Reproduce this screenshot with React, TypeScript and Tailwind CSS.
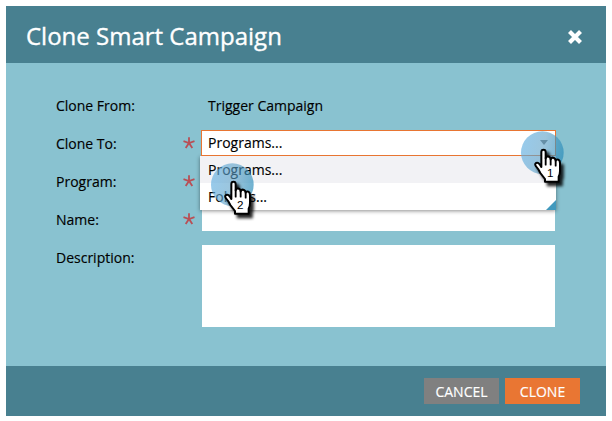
import React from "react";

function Pointer({ label, className }: { label: string; className: string }) {
  const gradient = `halo-${label}`;
  const shadow = `shade-${label}`;
  return (
    <svg
      className={`pointer-events-none absolute z-20 h-[74px] w-[64px] overflow-visible ${className}`}
      viewBox="0 0 192 222"
    >
      <defs>
        <linearGradient id={gradient} x1="0" x2="1" y1="0.4" y2="0.6">
          <stop offset="0" stopColor="#62b0e2" stopOpacity="0.66" />
          <stop offset="0.5" stopColor="#5a9fc6" stopOpacity="0.6" />
          <stop offset="1" stopColor="#2389b8" stopOpacity="0.66" />
        </linearGradient>
        <filter id={shadow} x="-40%" y="-30%" width="200%" height="180%">
          <feGaussianBlur stdDeviation="5.5" />
        </filter>
      </defs>
      <circle cx="64" cy="65" r="64" fill={`url(#${gradient})`} />
      <g transform="translate(36 47)">
        <path
          d="M25 60V16Q25 9 31.5 9T38 16V34L80 46V76Q81 84 77 92V105H36V97L22 79Q16 66 9 59Q4 52 9 49Q15 46 25 58Z"
          transform="translate(9 10)"
          fill="#000"
          stroke="#000"
          strokeWidth="7"
          opacity="0.85"
          filter={`url(#${shadow})`}
        />
        <path
          d="M25 61V16Q25 9 31.5 9T38 16V35Q39 29 45 29.5Q52 30 53 38Q55 32 61 33Q67 34 68 42Q70 37 76 39Q81 41 81 50V73Q81 82 77 90V105H36V97L22 79Q16 66 9 59Q4 52 9 49Q15 46 20 53Z"
          fill="#fff"
          stroke="#000"
          strokeWidth="6"
          strokeLinejoin="round"
        />
        <path d="M38 34V54M53 38V54M68 42V57" fill="none" stroke="#000" strokeWidth="5.5" strokeLinecap="round" />
        <text
          x="52"
          y="91"
          textAnchor="middle"
          fontSize="35"
          fontFamily="Liberation Sans, sans-serif"
          fill="#000"
        >
          {label}
        </text>
      </g>
    </svg>
  );
}

function Label({ children, required }: { children: string; required?: boolean }) {
  return (
    <div className="flex w-[145px] shrink-0 items-center justify-between pr-[6px]">
      <span>{children}</span>
      {required && (
        <svg className="h-3 w-3" viewBox="0 0 12 12" fill="none" stroke="#b94f55" strokeWidth="1.8">
          <path d="M6 .3V6M.5 4.2 6 6l5.5-1.8M2.7 11 6 6l3.3 5" />
        </svg>
      )}
    </div>
  );
}

export default function App() {
  return (
    <div className="h-[421px] w-[612px] overflow-hidden bg-white p-[6px] font-['Open_Sans',sans-serif] text-[14px] leading-[19px] text-black [-webkit-text-stroke:0.15px]">
      <div className="flex h-[410px] w-[600px] flex-col bg-[#89c2d0]">
        <header className="flex h-[57px] shrink-0 items-center justify-between bg-[#488090] pr-6 pl-5">
          <h1 className="relative top-px text-[24px] leading-8 text-white [-webkit-text-stroke:0.35px]">
            Clone Smart Campaign
          </h1>
          <svg className="relative top-[2px] h-[14px] w-[14px]" viewBox="0 0 14 14" stroke="#fff" strokeWidth="4.2">
            <path d="m1.5 1.5 11 11m0-11-11 11" />
          </svg>
        </header>

        <main className="flex flex-1 flex-col gap-3 pt-[29px] pl-[50px]">
          <div className="flex h-[26px] items-center">
            <Label>Clone From:</Label>
            <span className="pl-[7px]">Trigger Campaign</span>
          </div>
          <div className="flex h-[26px] items-center">
            <Label required>Clone To:</Label>
            <div className="relative h-[26px] w-[355px]">
              <div className="relative z-10 flex h-full items-center justify-between border border-[#e87532] bg-white pr-[7px] pb-[2px] pl-[6px]">
                <span>Programs...</span>
                <svg className="h-[5px] w-2" viewBox="0 0 8 5">
                  <path d="M0 0h8L4 5Z" fill="#777" />
                </svg>
              </div>
              <div className="absolute top-[26px] -left-px h-[54px] w-[356px] bg-white shadow-[0_1px_4px_rgba(0,0,0,0.45)]">
                <div className="flex h-[27px] items-center bg-[#f2f2f5] pb-px pl-2">Programs...</div>
                <div className="flex h-[27px] items-center pb-px pl-2">Folders...</div>
                <svg className="absolute right-0 bottom-0 h-[10px] w-[10px]" viewBox="0 0 10 10">
                  <path d="M10 0v10H0Z" fill="#4199bd" />
                </svg>
              </div>
              <Pointer label="1" className="top-[1px] left-[320px]" />
              <Pointer label="2" className="top-[33px] left-[10px]" />
            </div>
          </div>
          <div className="flex h-[26px] items-center">
            <Label required>Program:</Label>
            <div className="h-[26px] w-[354px] bg-white" />
          </div>
          <div className="flex h-[26px] items-center">
            <Label required>Name:</Label>
            <div className="ml-px h-[24px] w-[353px] bg-white" />
          </div>
          <div className="flex items-start pt-px">
            <div className="pt-[3px]">
              <Label>Description:</Label>
            </div>
            <div className="ml-px h-[82px] w-[353px] bg-white" />
          </div>
        </main>

        <footer className="flex h-[50px] shrink-0 items-center justify-end gap-[6px] bg-[#488090] pr-[26px]">
          <button className="h-[26px] w-[75px] bg-[#808080] text-white">CANCEL</button>
          <button className="h-[26px] w-[75px] bg-[#e97633] text-white">CLONE</button>
        </footer>
      </div>
    </div>
  );
}
